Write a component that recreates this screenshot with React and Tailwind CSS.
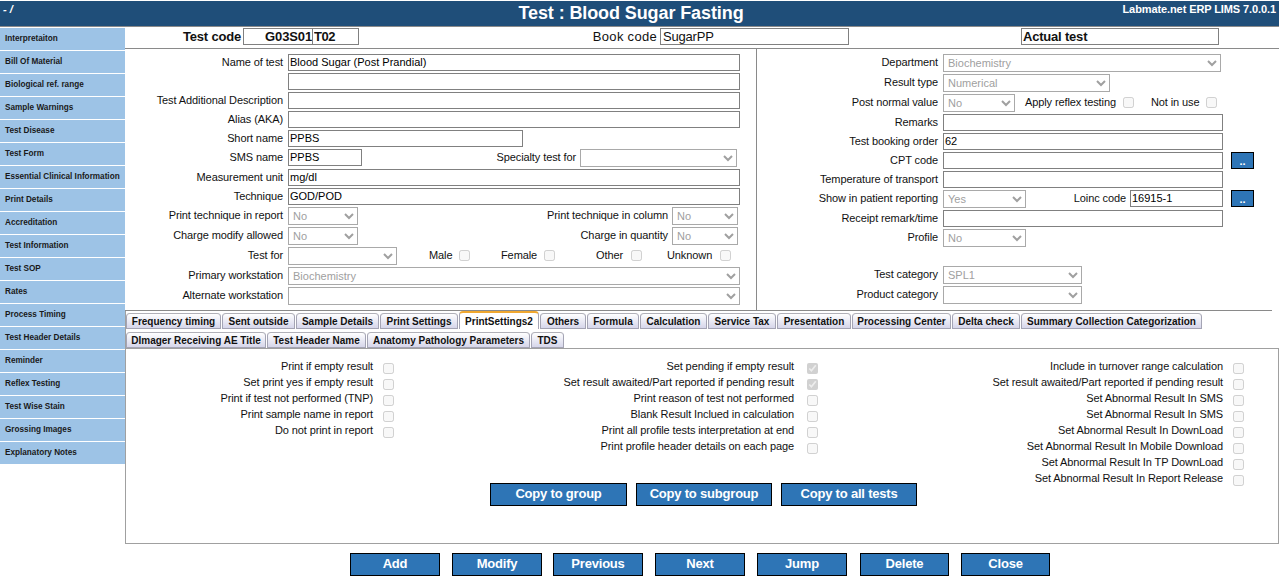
import React from "react";

const side = ["Interpretaiton","Bill Of Material","Biological ref. range","Sample Warnings","Test Disease","Test Form","Essential Clinical Information","Print Details","Accreditation","Test Information","Test SOP","Rates","Process Timing","Test Header Details","Reminder","Reflex Testing","Test Wise Stain","Grossing Images","Explanatory Notes"];
const tabs1 = [["Frequency timing",95],["Sent outside",73],["Sample Details",83],["Print Settings",78],["PrintSettings2",80,true],["Others",46],["Formula",52],["Calculation",67],["Service Tax",68],["Presentation",74],["Processing Center",99],["Delta check",68],["Summary Collection Categorization",181]];
const tabs2 = [["DImager Receiving AE Title",140],["Test Header Name",99],["Anatomy Pathology Parameters",163],["TDS",33]];
const col1 = ["Print if empty result","Set print yes if empty result","Print if test not performed (TNP)","Print sample name in report","Do not print in report"];
const col2 = [["Set pending if empty result",1],["Set result awaited/Part reported if pending result",1],["Print reason of test not performed"],["Blank Result Inclued in calculation"],["Print all profile tests interpretation at end"],["Print profile header details on each page"]];
const col3 = ["Include in turnover range calculation","Set result awaited/Part reported if pending result","Set Abnormal Result In SMS","Set Abnormal Result In SMS","Set Abnormal Result In DownLoad","Set Abnormal Result In Mobile Download","Set Abnormal Result In TP DownLoad","Set Abnormal Result In Report Release"];

function Input({ w, value, cls = "" }) {
  return <input readOnly value={value || ""} className={`h-[17px] border border-[#808080] bg-white px-[1px] pb-[1px] text-[11px] text-black outline-none ${w} ${cls}`} />;
}
function Sel({ w, value }) {
  return (
    <select disabled value={value || ""} className={`h-[18px] border border-[#a9a9a9] bg-white text-[11px] text-[#a0a0a0] opacity-100 ${w}`}>
      <option value={value || ""}>{value || ""}</option>
    </select>
  );
}
function Chk({ checked, cls = "" }) {
  return <input type="checkbox" disabled checked={!!checked} readOnly className={`m-0 h-[11px] w-[11px] shrink-0 ${cls}`} />;
}
function Lbl({ cls = "", children }) {
  return <span className={`whitespace-nowrap text-[11px] leading-[16px] tracking-[-0.1px] ${cls}`}>{children}</span>;
}
function LRow({ label, h, children }) {
  return (
    <div className={`flex items-start ${h}`}>
      <Lbl cls="w-[158px] shrink-0 text-right">{label}</Lbl>
      <div className="ml-[5px] flex items-start">{children}</div>
    </div>
  );
}
function RRow({ label, h, children }) {
  return (
    <div className={`flex items-start ${h}`}>
      <Lbl cls="w-[181px] shrink-0 text-right">{label}</Lbl>
      <div className="ml-[5px] flex items-start">{children}</div>
    </div>
  );
}
function Btn({ w, children }) {
  return <button className={`h-[23px] whitespace-nowrap border border-black bg-[#2e75b6] pb-[1px] text-[13px] font-bold tracking-[-0.2px] text-white ${w}`}>{children}</button>;
}
function Dots() {
  return <button className="ml-[8px] h-[17px] w-[23px] border border-black bg-[#2e75b6] text-[11px] font-bold leading-[14px] text-white">..</button>;
}
function Tab({ t }) {
  const [name, w, active] = t;
  return (
    <div style={{ width: w }} className={`flex shrink-0 items-center justify-center whitespace-nowrap rounded-t-[4px] border-x border-[#a4a4b4] text-[10px] font-bold text-[#111] ${active ? "h-[18px] border-t-2 border-t-[#f0a830] bg-white" : "h-[16px] border-b border-t border-b-[#a4a4b4] border-t-[#b0b0b8] bg-gradient-to-b from-white to-[#d6d6ea]"}`}>
      {name}
    </div>
  );
}
function CheckCol({ items, lw, gap }) {
  return (
    <div className="flex flex-col" style={{ width: lw }}>
      {items.map((it, i) => {
        const [label, c] = Array.isArray(it) ? it : [it];
        return (
          <div key={i} className="flex h-[16px] items-start">
            <div className="flex-1 whitespace-nowrap text-right text-[11px] leading-[12px] tracking-[-0.1px]">{label}</div>
            <Chk checked={c} cls={`mt-[3px] ${gap}`} />
          </div>
        );
      })}
    </div>
  );
}

export default function App() {
  return (
    <div className="h-[582px] w-[1279px] overflow-hidden bg-white pt-[1px] text-[#111]" style={{ fontFamily: '"Liberation Sans", Arial, sans-serif' }}>
      <header className="relative flex h-[26px] items-center justify-center border-b border-[#8a8a8a] bg-[#1f4e79] text-white">
        <span className="absolute left-[3px] top-[1px] text-[11px] font-bold italic leading-[14px]">- /</span>
        <span className="mr-[17px] text-[18px] font-bold tracking-[-0.1px]">Test : Blood Sugar Fasting</span>
        <span className="absolute right-[3px] top-[1px] text-[11px] font-bold leading-[14px] tracking-[-0.1px]">Labmate.net ERP LIMS 7.0.0.1</span>
      </header>
      <div className="mt-[1px] flex">
        <nav className="flex w-[125px] shrink-0 flex-col gap-[1px]">
          {side.map((s) => (
            <div key={s} className="flex h-[22px] items-center whitespace-nowrap bg-[#9dc3e6] pl-[5px] text-[8.2px] font-bold text-[#1a1a1a]">{s}</div>
          ))}
        </nav>
        <main className="min-w-0 flex-1">
          <div className="flex h-[21px] items-start border-b border-[#8a8a8a]">
            <span className="ml-[58px] w-[60px] text-[13px] font-bold leading-[17px] tracking-[-0.2px]">Test code</span>
            <input readOnly value="G03S01" className="h-[17px] w-[70px] border border-[#808080] pl-[21px] text-[13px] font-bold tracking-[-0.1px] outline-none" />
            <input readOnly value="T02" className="ml-[-1px] h-[17px] w-[47px] border border-[#808080] px-[1px] text-[13px] font-bold tracking-[-0.5px] outline-none" />
            <span className="w-[298px] text-right text-[13px] leading-[17px] tracking-[0.3px]">Book code</span>
            <input readOnly value="SugarPP" className="ml-[3px] h-[17px] w-[189px] border border-[#808080] px-[2px] text-[13px] tracking-[-0.2px] outline-none" />
            <input readOnly value="Actual test" className="ml-[172px] h-[17px] w-[198px] border border-[#808080] px-[1px] text-[13px] font-bold tracking-[-0.2px] outline-none" />
          </div>
          <div className="flex h-[261px]">
            <section className="w-[632px] shrink-0 border-r border-[#8a8a8a] pt-[5px]">
              <LRow label="Name of test" h="h-[19px]"><Input w="w-[452px]" value="Blood Sugar (Post Prandial)" /></LRow>
              <LRow label="" h="h-[19px]"><Input w="w-[452px]" /></LRow>
              <LRow label="Test Additional Description" h="h-[19px]"><Input w="w-[452px]" /></LRow>
              <LRow label="Alias (AKA)" h="h-[19px]"><Input w="w-[452px]" /></LRow>
              <LRow label="Short name" h="h-[19px]"><Input w="w-[235px]" value="PPBS" /></LRow>
              <LRow label="SMS name" h="h-[20px]">
                <Input w="w-[74px]" value="PPBS" />
                <Lbl cls="w-[214px] text-right">Specialty test for</Lbl>
                <Sel w="ml-[4px] w-[157px]" />
              </LRow>
              <LRow label="Measurement unit" h="h-[19px]"><Input w="w-[452px]" value="mg/dl" /></LRow>
              <LRow label="Technique" h="h-[19px]"><Input w="w-[452px]" value="GOD/POD" /></LRow>
              <LRow label="Print technique in report" h="h-[20px]">
                <Sel w="w-[70px]" value="No" />
                <Lbl cls="w-[310px] text-right">Print technique in column</Lbl>
                <Sel w="ml-[4px] w-[66px]" value="No" />
              </LRow>
              <LRow label="Charge modify allowed" h="h-[20px]">
                <Sel w="w-[70px]" value="No" />
                <Lbl cls="w-[310px] text-right">Charge in quantity</Lbl>
                <Sel w="ml-[4px] w-[66px]" value="No" />
              </LRow>
              <LRow label="Test for" h="h-[20px]">
                <Sel w="w-[109px]" />
                <Lbl cls="ml-[32px] w-[23px]">Male</Lbl>
                <Chk cls="ml-[7px] mt-[3px]" />
                <Lbl cls="ml-[31px] w-[36px]">Female</Lbl>
                <Chk cls="ml-[7px] mt-[3px]" />
                <Lbl cls="ml-[41px] w-[27px]">Other</Lbl>
                <Chk cls="ml-[8px] mt-[3px]" />
                <Lbl cls="ml-[25px] w-[45px]">Unknown</Lbl>
                <Chk cls="ml-[8px] mt-[3px]" />
              </LRow>
              <LRow label="Primary workstation" h="h-[20px]"><Sel w="w-[452px]" value="Biochemistry" /></LRow>
              <LRow label="Alternate workstation" h="h-[20px]"><Sel w="w-[452px]" /></LRow>
            </section>
            <section className="flex-1 pt-[5px]">
              <RRow label="Department" h="h-[20px]"><Sel w="w-[278px]" value="Biochemistry" /></RRow>
              <RRow label="Result type" h="h-[20px]"><Sel w="w-[167px]" value="Numerical" /></RRow>
              <RRow label="Post normal value" h="h-[20px]">
                <Sel w="w-[72px]" value="No" />
                <Lbl cls="ml-[10px] w-[91px]">Apply reflex testing</Lbl>
                <Chk cls="ml-[7px] mt-[3px]" />
                <Lbl cls="ml-[17px] w-[48px]">Not in use</Lbl>
                <Chk cls="ml-[7px] mt-[3px]" />
              </RRow>
              <RRow label="Remarks" h="h-[19px]"><Input w="w-[280px]" /></RRow>
              <RRow label="Test booking order" h="h-[19px]"><Input w="w-[280px]" value="62" /></RRow>
              <RRow label="CPT code" h="h-[19px]"><Input w="w-[280px]" /><Dots /></RRow>
              <RRow label="Temperature of transport" h="h-[19px]"><Input w="w-[280px]" /></RRow>
              <RRow label="Show in patient reporting" h="h-[20px]">
                <Sel w="w-[83px]" value="Yes" />
                <Lbl cls="w-[100px] text-right">Loinc code</Lbl>
                <Input w="ml-[4px] w-[93px]" value="16915-1" />
                <Dots />
              </RRow>
              <RRow label="Receipt remark/time" h="h-[19px]"><Input w="w-[280px]" /></RRow>
              <RRow label="Profile" h="h-[37px]"><Sel w="w-[83px]" value="No" /></RRow>
              <RRow label="Test category" h="h-[20px]"><Sel w="w-[139px]" value="SPL1" /></RRow>
              <RRow label="Product category" h="h-[20px]"><Sel w="w-[139px]" /></RRow>
            </section>
          </div>
          <div className="mr-[7px] h-[1px] bg-[#8a8a8a]" />
          <div className="h-[37px] border-l border-[#a0a0a0]">
            <div className="flex h-[18px] items-end gap-[1px]">
              {tabs1.map((t) => <Tab key={t[0]} t={t} />)}
            </div>
            <div className="mt-[3px] flex h-[16px] items-end gap-[1px]">
              {tabs2.map((t) => <Tab key={t[0]} t={t} />)}
            </div>
          </div>
          <div className="h-[196px] border border-[#a0a0a0] pt-[11px]">
            <div className="flex items-start">
              <div className="ml-[2px]"><CheckCol items={col1} lw={266} gap="ml-[10px]" /></div>
              <div className="ml-[147px]"><CheckCol items={col2} lw={277} gap="ml-[13px]" /></div>
              <div className="ml-[138px]"><CheckCol items={col3} lw={288} gap="ml-[10px]" /></div>
            </div>
            <div className="-mt-[5px] ml-[364px] flex gap-[9px]">
              <Btn w="w-[137px]">Copy to group</Btn>
              <Btn w="w-[136px]">Copy to subgroup</Btn>
              <Btn w="w-[136px]">Copy to all tests</Btn>
            </div>
          </div>
          <div className="ml-[225px] mt-[9px] flex">
            <Btn w="w-[90px]">Add</Btn>
            <Btn w="ml-[12px] w-[90px]">Modify</Btn>
            <Btn w="ml-[11px] w-[90px]">Previous</Btn>
            <Btn w="ml-[12px] w-[90px]">Next</Btn>
            <Btn w="ml-[12px] w-[90px]">Jump</Btn>
            <Btn w="ml-[13px] w-[89px]">Delete</Btn>
            <Btn w="ml-[12px] w-[89px]">Close</Btn>
          </div>
        </main>
      </div>
    </div>
  );
}
